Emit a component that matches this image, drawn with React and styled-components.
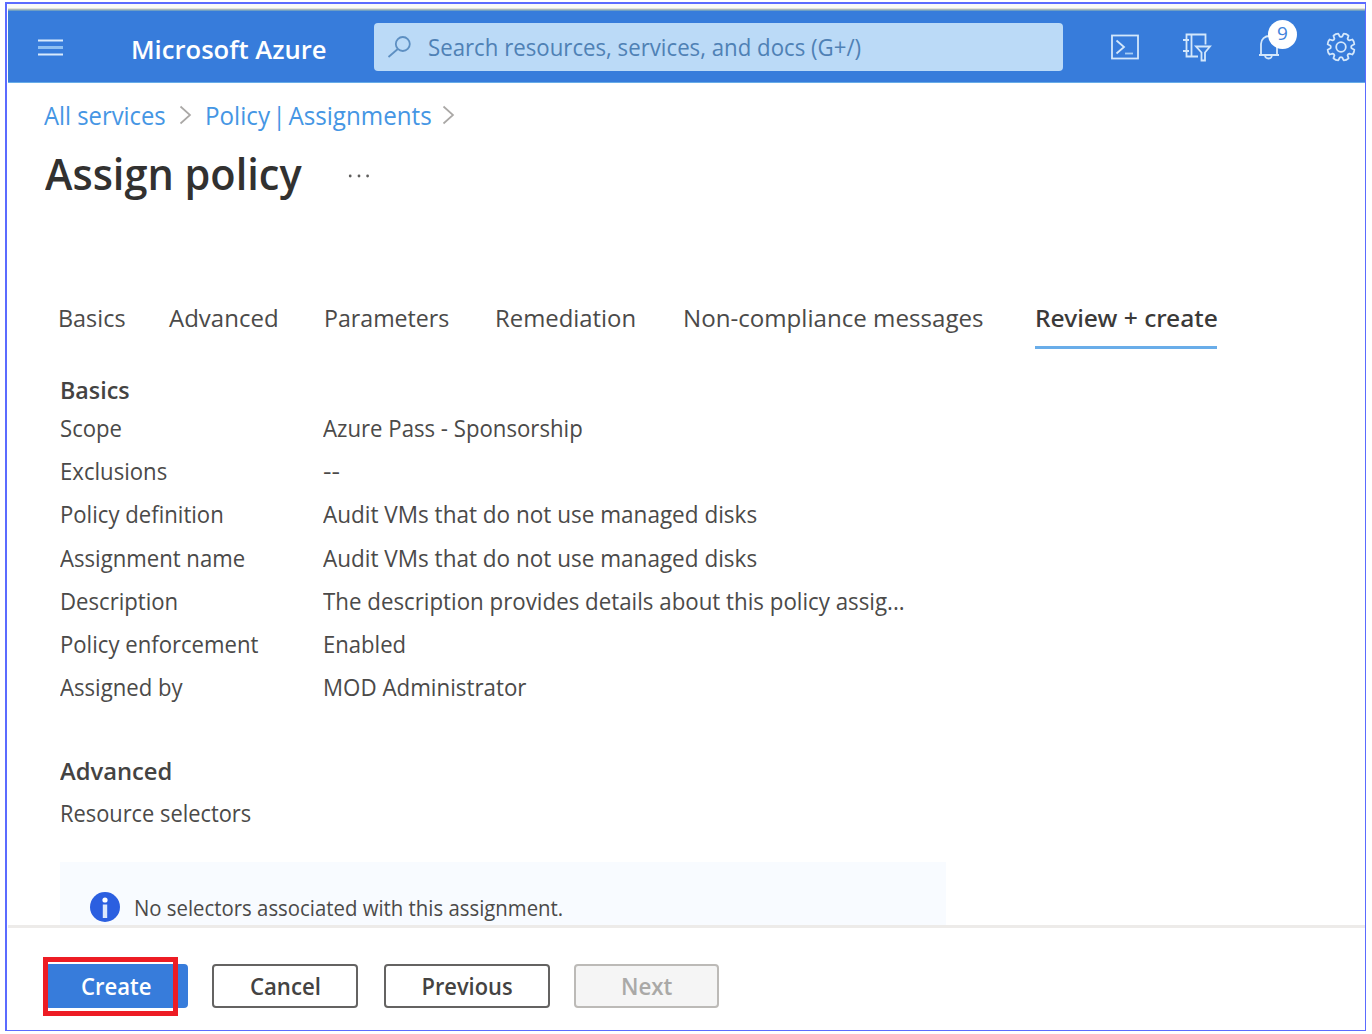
import React from 'react';
import styled, { createGlobalStyle, css } from 'styled-components';

const Global = createGlobalStyle`
  * { box-sizing: border-box; }
  body { margin: 0; background: #fff; overflow: hidden; }
  button { font: inherit; padding: 0; }
`;

const Frame = styled.div`
  margin: 2px 0 0 5px;
  width: 1361px;
  height: 1029px;
  border: solid #5b6bff;
  border-width: 2px 1px 1px 2px;
  padding-left: 1px;
  display: flex;
  flex-direction: column;
  font-family: 'Open Sans', 'Noto Sans', sans-serif;
  font-size: 24px;
  line-height: 34px;
  color: #4b4a49;
`;

const Label = styled.span`
  display: inline-block;
  white-space: nowrap;
  word-spacing: ${(p) => p.$space || 0}px;
  transform: scaleX(${(p) => p.$fit || 1});
  transform-origin: ${(p) => p.$origin || 'left'} center;
`;

const TopEdge = styled.div`
  height: 7px;
  flex: none;
  background: linear-gradient(#f9faf8 0 4px, #e2e2da 4px 5px, #a9b8bd 5px 6px, #6f9fc4 6px);
`;

const Header = styled.header`
  height: 72px;
  flex: none;
  display: flex;
  align-items: flex-start;
  background: #377cdb;
  border-bottom: 1px solid #67ace8;
  padding: 12px 0 0 30px;
  color: #fff;
`;

const MenuIcon = styled.svg`
  flex: none;
  width: 25px;
  height: 18px;
  margin-top: 15px;
`;

const Brand = styled.div`
  flex: none;
  width: 243px;
  margin-left: 68px;
  padding-top: 9px;
  font-size: 26px;
  font-weight: 600;
`;

const SearchBox = styled.div`
  flex: none;
  width: 689px;
  height: 48px;
  display: flex;
  align-items: center;
  gap: 16px;
  padding: 0 0 1px 13px;
  border-radius: 4px;
  background: #bbdaf7;
  color: #4f81b5;
`;

const HeaderTools = styled.div`
  display: flex;
  margin: 9px 0 0 47px;
`;

const Tool = styled.div`
  position: relative;
  width: 30px;
  height: 30px;
  margin-right: ${(p) => p.$gap || 0}px;
  svg { display: block; }
`;

const Badge = styled.span`
  position: absolute;
  left: 10px;
  top: -12px;
  width: 29px;
  height: 29px;
  border-radius: 50%;
  background: #fff;
  color: #3f83dc;
  font-size: 19px;
  line-height: 27px;
  text-align: center;
`;

const Breadcrumb = styled.nav`
  display: flex;
  align-items: center;
  height: 34px;
  margin: 15px 0 0 36px;
  font-size: 26px;
  color: #4596e4;
`;

const Crumb = styled.div`
  width: ${(p) => p.$w}px;
`;

const Chevron = styled.svg`
  width: 13px;
  height: 20px;
  margin: 0 ${(p) => p.$after || 0}px 0 13px;
`;

const TitleRow = styled.div`
  display: flex;
  align-items: center;
  height: 56px;
  margin: 14px 0 0 37px;
`;

const Title = styled.h1`
  margin: 0;
  width: 303px;
  font-size: 43px;
  line-height: 56px;
  font-weight: 600;
  color: #323130;
`;

const MoreIcon = styled.svg`
  width: 22px;
  height: 4px;
  margin-top: 3px;
`;

const Tabs = styled.div`
  display: flex;
  flex: none;
  height: 48px;
  margin: 99px 0 0 50px;
`;

const Tab = styled.div`
  flex: none;
  width: ${(p) => p.$w}px;
  ${(p) => p.$active && css`
    font-family: 'Noto Sans', sans-serif;
    font-weight: 500;
    color: #3b3a39;
    border-bottom: 3px solid #69ade9;
  `}
`;

const Body = styled.main`
  flex: 1;
  min-height: 0;
  overflow: hidden;
  padding: 24px 0 0 52px;
`;

const Heading = styled.h2`
  margin: ${(p) => p.$top || 0}px 0 0;
  height: ${(p) => p.$h || 34}px;
  font-size: 24px;
  line-height: 34px;
  font-weight: 600;
  color: #444342;
`;

const Row = styled.div`
  display: grid;
  grid-template-columns: 262.5px 1fr;
  height: 43.2px;
  line-height: 42px;
`;

const Info = styled.div`
  display: flex;
  align-items: center;
  gap: 14px;
  width: 886px;
  height: 90px;
  margin-top: 32px;
  padding-left: 30px;
  background: #f8fbff;
  font-size: 22px;
`;

const InfoIcon = styled.svg`
  width: 30px;
  height: 30px;
`;

const Footer = styled.footer`
  position: relative;
  flex: none;
  display: flex;
  height: 105px;
  border-top: 3px solid #edebe9;
  padding: 36px 0 0 37px;
`;

const Button = styled.button`
  width: ${(p) => p.$w}px;
  height: 44px;
  margin-right: ${(p) => p.$gap || 0}px;
  border: 2px solid #646362;
  border-radius: 4px;
  background: #fff;
  color: #444342;
  font-weight: 600;
  line-height: 38px;
  ${(p) => p.$primary && css`
    border-color: #377cdb;
    background: #377cdb;
    color: #fff;
  `}
  ${(p) => p.disabled && css`
    border-color: #bcbab7;
    background: #f5f5f5;
    color: #aaa9a7;
  `}
`;

const Highlight = styled.div`
  position: absolute;
  left: 35px;
  top: 29px;
  width: 135px;
  height: 59px;
  border: 5px solid #ed1c24;
`;

function gearPath() {
  const pt = (r, deg) => {
    const a = (deg * Math.PI) / 180;
    return `${(15 + r * Math.cos(a)).toFixed(2)} ${(15 + r * Math.sin(a)).toFixed(2)}`;
  };
  let d = '';
  for (let i = 0; i < 8; i += 1) {
    const c = 22.5 + i * 45;
    d += `${i ? 'L' : 'M'}${pt(10.6, c - 16)} L${pt(13.6, c - 11)} Q${pt(14.4, c)} ${pt(13.6, c + 11)} L${pt(10.6, c + 16)} Q${pt(9.8, c + 22.5)} ${pt(10.6, c + 29)} `;
  }
  return `${d}Z`;
}

const stroke = { fill: 'none', stroke: '#d3e7fb', strokeWidth: 1.8 };

const tabs = [
  ['Basics', 111, 0.975],
  ['Advanced', 154.5, 1],
  ['Parameters', 171.5, 0.965],
  ['Remediation', 188, 0.995],
  ['Non-compliance messages', 351.5, 1.005],
];

const rows = [
  ['Scope', 'Azure Pass - Sponsorship', 0.924],
  ['Exclusions', '--', 1.1],
  ['Policy definition', 'Audit VMs that do not use managed disks'],
  ['Assignment name', 'Audit VMs that do not use managed disks'],
  ['Description', 'The description provides details about this policy assig...', 0.929],
  ['Policy enforcement', 'Enabled', 0.92],
  ['Assigned by', 'MOD Administrator', 0.93],
];

const Separator = ({ after }) => (
  <Chevron $after={after} viewBox="0 0 13 20">
    <path d="M1.5 1.5 L11 10 L1.5 18.5" fill="none" stroke="#aaa8a6" strokeWidth="1.7" />
  </Chevron>
);

export default function App() {
  return (
    <Frame>
      <Global />
      <TopEdge />
      <Header>
        <MenuIcon viewBox="0 0 25 18">
          <path d="M0 2.5H25M0 16.5H25" stroke="#d9eafc" strokeWidth="2" />
          <path d="M0 9.5H25" stroke="#8fc0f2" strokeWidth="3" />
        </MenuIcon>
        <Brand><Label $fit={0.985}>Microsoft Azure</Label></Brand>
        <SearchBox>
          <svg width="25" height="22" viewBox="0 0 25 22" fill="none" stroke="#5d8fc2" strokeWidth="1.8">
            <circle cx="15.8" cy="8" r="7" />
            <path d="M10.8 13 L1.5 21" />
          </svg>
          <Label $fit={0.926}>Search resources, services, and docs (G+/)</Label>
        </SearchBox>
        <HeaderTools>
          <Tool $gap={42}>
            <svg width="30" height="30" {...stroke}>
              <rect x="2" y="3.5" width="26" height="23" />
              <path d="M6.5 8.5 L14 15 L6.5 21.5" />
              <path d="M15 21.5H23" stroke="#a5cdf5" />
            </svg>
          </Tool>
          <Tool $gap={46}>
            <svg width="30" height="30" {...stroke}>
              <path d="M23.5 12.5V2.5H4.5V24.5H16" />
              <path d="M9.5 2.5V24.5M1 8H7M1 19H7" />
              <path d="M14 14.5H28L23 20.5V28.5H19.5V20.5Z" />
            </svg>
          </Tool>
          <Tool $gap={38}>
            <svg width="30" height="30" {...stroke}>
              <path d="M1 23H21M3 23V12C3 7 7 4 11.5 4C16 4 19 7 19 12V23M7 23.5C7.5 27.5 13.5 27.5 14 23.5" />
            </svg>
            <Badge>9</Badge>
          </Tool>
          <Tool>
            <svg width="30" height="30" {...stroke}>
              <path d={gearPath()} strokeLinejoin="round" />
              <circle cx="15" cy="15" r="4.8" />
            </svg>
          </Tool>
        </HeaderTools>
      </Header>
      <Breadcrumb>
        <Crumb $w={122}><Label $fit={0.915}>All services</Label></Crumb>
        <Separator after={13} />
        <Crumb $w={224}><Label $fit={0.93} $space={-4}>Policy | Assignments</Label></Crumb>
        <Separator />
      </Breadcrumb>
      <TitleRow>
        <Title><Label $fit={0.965}>Assign policy</Label></Title>
        <MoreIcon viewBox="0 0 22 4" fill="#5f5e5d">
          <circle cx="2.2" cy="2" r="1.4" />
          <circle cx="11" cy="2" r="1.4" />
          <circle cx="19.6" cy="2" r="1.4" />
        </MoreIcon>
      </TitleRow>
      <Tabs>
        {tabs.map(([name, w, fit], i) => (
          <Tab key={name} $w={w}><Label $fit={fit}>{name}</Label></Tab>
        ))}
        <Tab $w={182} $active><Label $fit={1.025}>Review + create</Label></Tab>
      </Tabs>
      <Body>
        <Heading $h={34}><Label $fit={0.97}>Basics</Label></Heading>
        {rows.map(([name, value, fit]) => (
          <Row key={name}>
            <div><Label $fit={0.922}>{name}</Label></div>
            <div><Label $fit={fit || 0.938}>{value}</Label></div>
          </Row>
        ))}
        <Heading $top={45} $h={42}><Label $fit={0.99}>Advanced</Label></Heading>
        <Label $fit={0.91}>Resource selectors</Label>
        <Info>
          <InfoIcon viewBox="0 0 30 30">
            <circle cx="15" cy="15" r="15" fill="#2b5fe0" />
            <circle cx="15" cy="8" r="2.6" fill="#fff" />
            <rect x="12.8" y="12.5" width="4.4" height="13.5" fill="#dce8fc" />
          </InfoIcon>
          <Label $fit={0.925}>No selectors associated with this assignment.</Label>
        </Info>
      </Body>
      <Footer>
        <Button $w={143} $gap={24} $primary><Label $fit={0.92} $origin="center">Create</Label></Button>
        <Button $w={146} $gap={26}><Label $fit={0.925} $origin="center">Cancel</Label></Button>
        <Button $w={166} $gap={24}><Label $fit={0.91} $origin="center">Previous</Label></Button>
        <Button $w={145} disabled><Label $fit={0.93} $origin="center">Next</Label></Button>
        <Highlight />
      </Footer>
    </Frame>
  );
}
